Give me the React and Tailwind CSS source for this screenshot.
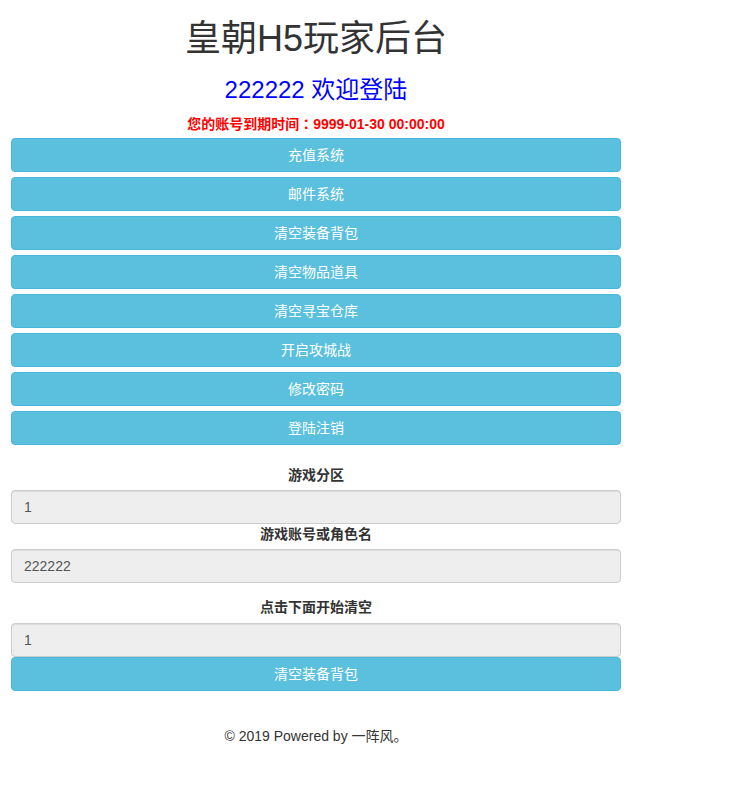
const menu = ['充值系统', '邮件系统', '清空装备背包', '清空物品道具', '清空寻宝仓库', '开启攻城战', '修改密码', '登陆注销']

function Btn({ children }) {
  return (
    <button className="w-full h-[34px] rounded-[4px] border border-[#46b8da] bg-[#5bc0de] text-white text-[14px] leading-[20px]">
      {children}
    </button>
  )
}

function Field({ value }) {
  return (
    <div className="w-full h-[34px] rounded-[4px] border border-[#ccc] bg-[#eee] px-[12px] text-[14px] leading-[32px] text-[#555] shadow-[inset_0_1px_1px_rgba(0,0,0,0.075)]">
      {value}
    </div>
  )
}

function Label({ children, className = '' }) {
  return <div className={`text-center text-[14px] leading-[20px] font-bold text-[#333] ${className}`}>{children}</div>
}

export default function App() {
  return (
    <div className="min-h-[797px] bg-white font-['Liberation_Sans','Noto_Sans_CJK_SC',sans-serif] text-[#333]">
      <div className="ml-[11px] w-[610px] flex flex-col">
        <h1 className="mt-[19px] h-[40px] text-center text-[36px] leading-[40px] text-[#333]">皇朝H5玩家后台</h1>
        <h2 className="mt-[17px] text-center text-[24px] leading-[28px] text-[#0000ff]">222222 欢迎登陆</h2>
        <p className="mt-[9px] h-[20px] overflow-hidden text-center text-[14px] leading-[20px] font-bold text-[#ff0000]">
          您的账号到期时间<span className="font-['Noto_Sans_CJK_TC',sans-serif] leading-[20px]">：</span>9999-01-30 00:00:00
        </p>
        <div className="mt-[5px] flex flex-col gap-[5px]">
          {menu.map((m) => (
            <Btn key={m}>{m}</Btn>
          ))}
        </div>
        <Label className="mt-[20px]">游戏分区</Label>
        <div className="mt-[5px]"><Field value="1" /></div>
        <Label>游戏账号或角色名</Label>
        <div className="mt-[5px]"><Field value="222222" /></div>
        <Label className="mt-[14px]">点击下面开始清空</Label>
        <div className="mt-[6px]"><Field value="1" /></div>
        <Btn>清空装备背包</Btn>
        <p className="mt-[35px] text-center text-[14px] leading-[20px] text-[#333]">© 2019 Powered by 一阵风。</p>
      </div>
    </div>
  )
}
